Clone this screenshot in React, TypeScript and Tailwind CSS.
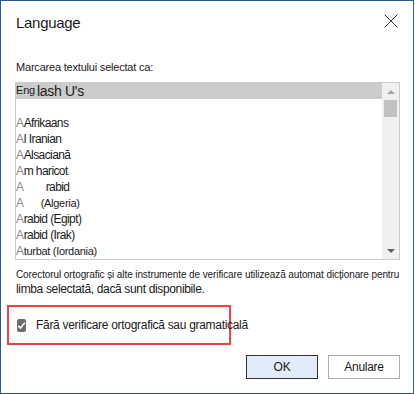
import React from 'react';

const font = { fontFamily: '"Liberation Sans", Arial, sans-serif' };

export default function App() {
  const items: { a: string; rest: string; gap?: string; small?: boolean }[] = [
    { a: 'A', rest: 'Afrikaans' },
    { a: 'A', rest: 'l', gap: 'Iranian' },
    { a: 'A', rest: 'Alsaciană' },
    { a: 'A', rest: 'm haricot' },
    { a: 'A', rest: '', gap: 'rabid' },
    { a: 'A', rest: '', gap: '(Algeria)', small: true },
    { a: 'A', rest: 'rabid (Egipt)' },
    { a: 'A', rest: 'rabid (Irak)' },
    { a: 'A', rest: 'turbat (Iordania)', small: true },
  ];

  return (
    <div
      style={font}
      className="w-[414px] h-[394px] border border-[#2b579a] bg-white flex flex-col text-[#1a1a1a]"
    >
      {/* Title bar */}
      <div className="flex items-start justify-between pl-[15px] pr-[15px] mt-[12px]">
        <span className="text-[15px] leading-[20px] tracking-[-0.3px]">Language</span>
        <svg width="14" height="14" viewBox="0 0 14 14" className="mt-px">
          <path d="M0.5 0.5 L13.5 13.5 M13.5 0.5 L0.5 13.5" stroke="#3a3a3a" strokeWidth="1" />
        </svg>
      </div>

      <div className="mt-[27px] pl-[15px] text-[11px] leading-[14px] tracking-[-0.2px]">
        Marcarea textului selectat ca:
      </div>

      {/* Language list */}
      <div className="mt-[8px] ml-[14px] w-[385px] h-[178px] border border-[#cbcbcb] flex overflow-hidden">
        <div className="flex-1 flex flex-col overflow-hidden">
          <div className="h-[17px] bg-[#cccccc] flex items-end whitespace-nowrap">
            <span className="text-[11px] leading-[14px] self-start tracking-[-0.2px]">Eng</span>
            <span className="ml-[2px] text-[14px] leading-[16px] tracking-[-0.3px]">lash U's</span>
          </div>
          <div className="mt-[8px] h-px bg-[#6e6e6e]" />
          <div className="mt-[8px] flex flex-col">
            {items.map((it, i) => (
              <div key={i} className="h-[16px] flex items-center whitespace-nowrap leading-[16px]">
                <span className="text-[12px] text-[#8a8a8a] font-light tracking-[-0.3px]">{it.a}</span>
                <span
                  className={
                    it.small
                      ? 'text-[11px] tracking-[-0.3px]'
                      : 'text-[12px] tracking-[-0.6px]'
                  }
                >
                  {it.rest}
                </span>
                {it.gap && (
                  <span
                    className={
                      it.rest === 'l'
                        ? 'ml-[3px] text-[12px] tracking-[-0.6px]'
                        : it.small
                          ? 'ml-[17px] text-[11px] tracking-[-0.3px]'
                          : 'ml-[22px] text-[12px] tracking-[-0.6px]'
                    }
                  >
                    {it.gap}
                  </span>
                )}
              </div>
            ))}
          </div>
        </div>
        {/* Scrollbar */}
        <div className="w-[17px] bg-[#f0f0f0] flex flex-col items-center">
          <svg width="8" height="4" viewBox="0 0 8 4" className="mt-[7px]">
            <path d="M4 0 L8 4 L0 4 Z" fill="#a3a3a3" />
          </svg>
          <div className="mt-[6px] w-[13px] h-[17px] bg-[#c1c1c1]" />
          <div className="flex-1" />
          <svg width="8" height="4" viewBox="0 0 8 4" className="mb-[6px]">
            <path d="M0 0 L8 0 L4 4 Z" fill="#5f5f5f" />
          </svg>
        </div>
      </div>

      {/* Description */}
      <div className="mt-[8px] pl-[15px] whitespace-nowrap">
        <div className="text-[10px] leading-[14px] tracking-[-0.1px]">
          Corectorul ortografic și alte instrumente de verificare utilizează automat dicționare pentru
        </div>
        <div className="text-[12px] leading-[14px] tracking-[-0.35px]">
          limba selectată, dacă sunt disponibile.
        </div>
      </div>

      {/* Highlighted checkbox */}
      <div className="mt-[9px] ml-[6px] w-[224px] h-[40px] border-2 border-[#e8454b] flex items-center pl-[8px] whitespace-nowrap">
        <div className="w-[13px] h-[13px] rounded-[2px] bg-[#6d6d6d] flex items-center justify-center">
          <svg width="9" height="9" viewBox="0 0 9 9">
            <path d="M1.2 4.8 L3.5 7 L7.8 1.8" stroke="white" strokeWidth="1.6" fill="none" />
          </svg>
        </div>
        <span className="ml-[10px] text-[12px] leading-[16px] tracking-[-0.3px]">
          Fără verificare ortografică sau gramaticală
        </span>
      </div>

      {/* Buttons */}
      <div className="mt-[10px] flex justify-end gap-[10px] pr-[13px]">
        <button className="w-[72px] h-[24px] border border-[#333333] bg-[#e1ebfa] text-[12px] tracking-[-0.2px]">
          OK
        </button>
        <button className="w-[72px] h-[24px] border border-[#adadad] bg-white text-[12px] tracking-[-0.3px]">
          Anulare
        </button>
      </div>
    </div>
  );
}
